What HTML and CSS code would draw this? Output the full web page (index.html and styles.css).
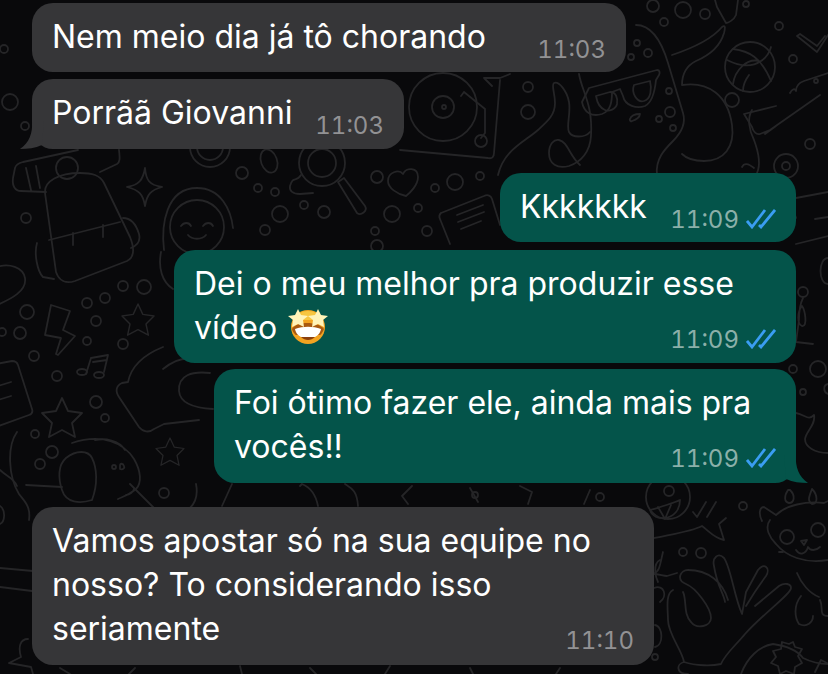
FILE: index.html
```
<!DOCTYPE html>
<html lang="pt-BR">
  <head>
    <meta charset="UTF-8" />
    <meta name="viewport" content="width=device-width, initial-scale=1.0" />
    <title>Conversa</title>
    <link rel="stylesheet" href="styles.css">
  </head>
  <body>
    <svg class="wallpaper" viewBox="0 0 828 674" aria-hidden="true">
      <defs>
        <polygon id="star" points="0,-20 6,-7 20,-5 10,5 13,19 0,12 -13,19 -10,5 -20,-5 -6,-7" />
      </defs>

      <!-- backpack and bedroll -->
      <path d="M45 193c-1-12 14-20 35-20 12 0 20 2 24 10l26 54c4 10 5 20-3 24l-52 20c-9 3-16 0-19-9z" />
      <path d="M49 240l71-18M73 233v12M103 225v12" />
      <path d="M37 243c-3 10 0 28 6 34l11 2M123 218c8 0 13 6 16 16 2 8-3 12-8 14" />
      <path d="M46 192l-25-1c-6 0-9-5-8-13l2-10c1-4 4-5 8-6l55-12M100 172l17-8c3-2 3-5 2-14M26 168l5 22M36 166l4 22" />
      <circle cx="67" cy="168" r="11" />
      <path d="M145 168c1 12 4 17 17 19-11 3-15 7-17 19-2-12-6-16-18-19 12-2 16-7 18-19z" />

      <!-- little face -->
      <circle cx="197" cy="227" r="27" />
      <path d="M164 250c-3-25 2-62 33-62 24 0 34 22 36 40M181 226c3-4 8-4 10 0M203 226c3-4 8-4 10 0M188 235c4 5 14 5 18 0" />
      <path d="M161 252c-3 16 1 30 12 37" />

      <!-- bolt, stars, note -->
      <path d="M51 305l19 6-7 19 12 6-17 19-2-1 5-16-16-3z" />
      <use href="#star" transform="translate(138 320) scale(.8)" />
      <use href="#star" transform="translate(62 418)" />
      <use href="#star" transform="translate(170 452) scale(.7)" />
      <path d="M91 358l17-3-4 17M91 358l-5 16M93 362l14-2" />
      <ellipse cx="82" cy="372" rx="5" ry="3" />
      <ellipse cx="99" cy="375" rx="5" ry="3" />

      <!-- card and left oval -->
      <path d="M-4 364l16-3c3 0 5 1 6 4l14 44c1 3 0 5-3 6l-33 12M-2 386l13-4M-2 400l13-4" />
      <path d="M-3 267c12-4 26 0 28 11 2 13-14 21-28 27" />

      <!-- hand on the left -->
      <path d="M163 347c-20 8-32 20-35 35l-6 1c-6 3-7 8-3 14l20 30c4 5 10 6 15 2l10-5 35-4M163 369c10-8 20-12 30-10M210 373c-18-2-32 2-31 18 1 12 14 17 34 18" />

      <!-- dog -->
      <path d="M72 443c30-10 52 0 62 16 7 12 8 24 2 30-7 6-14 8-18 10M95 440c10-2 24 0 30 10M92 500c-12 4-26 3-30-10-4-12-4-25 4-32 10-8 22-8 26 0 5 10 6 26 0 42M120 469c3 1 5-1 4-3-1-3-4-3-4 0zM126 495c4 0 7-3 8-6" />
      <path d="M17 432c-10 14-9 44 2 62 5 7 12 12 10 26M26 485l36 2" />
      <circle cx="114" cy="467" r="2" />

      <!-- magnifier, heart, card -->
      <circle cx="322" cy="163" r="23" />
      <circle cx="322" cy="163" r="14" />
      <path d="M338 182l6-4 21 28c3 5-4 10-8 7z" />
      <path d="M301 175c-5 8-8 0-11 11-1 5 3 8 10 8l13-1" />
      <path d="M403 174c3-7 15-7 15 3 0 8-8 16-12 19-9-2-18-8-18-15 0-9 11-12 15-7z" />
      <path d="M441 213l43-17c4-2 7 0 8 3l8 26M441 213c-2 2-2 4-1 6l10 25M457 215l26-10M458 222l26-10M461 229l20-8" />
      <ellipse cx="269" cy="161" rx="8" ry="12" transform="rotate(-20 269 161)" />
      <circle cx="210" cy="147" r="20" />
      <circle cx="210" cy="147" r="13" />

      <!-- turntable -->
      <circle cx="443" cy="107" r="34" />
      <circle cx="443" cy="107" r="11" />
      <circle cx="444" cy="107" r="2" />
      <path d="M464 92l21 17v24l-4 5M461 96l3-4" />
      <circle cx="481" cy="141" r="6" />
      <path d="M500 80l-6 73c0 4-2 6-6 5l-88-8M484 78h16l10-4M484 78l8 8" />
      <circle cx="528" cy="87" r="5" />
      <circle cx="528" cy="112" r="7" />

      <!-- flame and tentacles -->
      <path d="M498 175c6-25 25-32 40-45 10-9 17-15 17-27 0-10-4-18-1-20 5-2 13 8 15 19 2 12-3 24 0 30 3 6 16 6 21 0" />
      <path d="M579 74c3 18 14 30 12 62-1 16-10 26-22 30-12 3-20-2-20-13 0-9 5-14 10-13 9 2 10 15 21 25" />
      <path d="M636 25c16 0 26 18 32 38l15 50c3 10-2 20-10 28-8 8-18 18-16 34M672 55c24-8 40-16 50-28 4-3 3 2 2 6-4 14-14 22-28 28-10 5-14 14-14 24 26-4 46 10 50 40 3 22-8 36-28 36-10 0-18-3-22-7" />
      <circle cx="637" cy="43" r="3" />
      <circle cx="648" cy="53" r="4" />
      <circle cx="631" cy="57" r="3" />

      <!-- sunglasses -->
      <path d="M589 88l68-18c3 0 3 3 2 5l-3 5c-1 10-3 22-11 26-8 3-20 0-22-10l-3-7-8 3c0 9-1 19-10 22-10 3-18-1-20-12z" />
      <path d="M596 96l14-4c6 0 8 6 7 12-1 5-8 8-12 6-5-2-8-8-9-14zM634 85l16-4c2 8 1 18-6 20-7 2-13-8-10-16z" />
      <path d="M632 121c4-1 8-4 8-7-5 0-9 2-10 5-1 1 1 3 2 2z" />
      <circle cx="670" cy="112" r="5" />
      <circle cx="659" cy="119" r="3" />
      <circle cx="673" cy="128" r="3" />
      <circle cx="669" cy="91" r="3" />

      <!-- basketball and top right -->
      <circle cx="750" cy="67" r="25" />
      <path d="M733 49c16 2 28 8 38 32M727 60c12 6 24 8 34 1 6-4 9-10 10-14M733 84c2-14 14-26 26-23M743 91c0-6 3-12 6-16" />
      <path d="M797 36l20 16 11-17M797 36l3-2 17 12 8-10" />
      <circle cx="793" cy="59" r="4" />
      <circle cx="779" cy="26" r="4" />
      <path d="M738 0l-2 15c-2 5-8 8-10 8l-9-16-2-7" />
      <circle cx="746" cy="4" r="3" />
      <circle cx="653" cy="6" r="6" />
      <circle cx="683" cy="10" r="8" />
      <circle cx="705" cy="14" r="5" />
      <circle cx="664" cy="22" r="4" />
      <circle cx="732" cy="100" r="7" />
      <path d="M828 73l-24 8c-6 2-8 5-8 10-1-3-4-2-6 2M820 95l-50 35-10 4c-4 1-7-3-8-7l-8-13 32-8M776 126l-11 8" />
      <circle cx="816" cy="81" r="2" />
      <path d="M752 110c-5 8-3 20 2 30 3 8 8 22 3 33M754 168c-6-5-10-5-12-1" />
      <circle cx="810" cy="144" r="5" />
      <circle cx="786" cy="166" r="12" />
      <circle cx="786" cy="166" r="4" />

      <!-- right edge -->
      <path d="M796 198l32-6M815 219l13-2M796 244l32-8M796 218l-4-12" />
      <path d="M828 258c-10 0-10 26 0 26" />
      <circle cx="803" cy="292" r="5" />
      <path d="M803 298c-4 8-4 18-4 22l-3 22 17 2M802 306c-5 6-5 18 0 20 6 1 3-16 0-20z" />
      <circle cx="793" cy="369" r="4" />
      <circle cx="818" cy="369" r="8" />
      <circle cx="803" cy="392" r="3" />
      <path d="M796 413c10 2 12 8 18 2 2 10-8 16-9 24 0 8 10 14 23 14M828 384c-5 1-5 8 0 10" />
      <path d="M812 489c-3 8-5 12 0 15 6 0 6-9 0-15zM788 490c-4 6-4 12 1 13 5 0 7-7 1-13z" />

      <!-- face with tongue, parcel -->
      <circle cx="668" cy="497" r="22" />
      <path d="M650 510c8-2 26-8 30-10 0 10-6 16-14 18-8 1-14-2-16-8zM658 507l7 12 6-14" />
      <circle cx="669" cy="491" r="5" />
      <path d="M646 540c20-5 45-8 56-14 8 6 12 12 22 14l-5-16 7-6" />
      <path d="M697 517l9-15M707 517l9-15M697 517l-4-5" />
      <circle cx="743" cy="506" r="4" />
      <circle cx="683" cy="552" r="4" />
      <circle cx="701" cy="553" r="5" />
      <path d="M663 552c-3 12-3 20-10 22 6 0 10 2 14 2l10-3M654 588c10-4 14 8 6 14" />

      <!-- ok hand -->
      <path d="M673 590c-8 4-5 20-5 30 0 14 14 30 16 42-8 2-8 12 4 12M684 662c12 4 28 4 37 2 4-10 16-20 24-30 20-22 46-40 46-46 0-4-6-6-12-2l-24 20M746 606c6-10 14-22 20-30 5-8-2-14-8-6l-12 22-4 22c-8-18-11-46-18-56-6-6-12 0-10 8 3 20 10 28 11 36M728 600c-5-18-20-30-40-30-8 0-12 10-2 14 10 4 25 24 25 34 0 8-14 12-20 4-8-8-4-22-8-30" />

      <!-- cat -->
      <path d="M762 521c-4-8-2-14 2-14l12 8c10-10 30-14 48-12l4-2M770 520c-6 8 0 18 6 24 10 12 28 20 52 16M797 573c4 10 12 20 22 24M801 596c-8 10-6 22-2 28 8 4 14-2 14-8M820 600c4 8-2 16 8 16" />
      <circle cx="787" cy="537" r="7" />
      <circle cx="818" cy="530" r="7" />
      <path d="M801 541l6-1-3 5zM796 550c4 6 10 4 12-3 2 4 8 4 12 0M779 552h4" />
      <path d="M782 642l7 2 4-2 2 5 7 2-4 7 4 7-7 4-1 7-8-3-6 3-2-8-7-3 5-6-3-6 8-2z" />
      <path d="M815 672l6-12 6 3" />
      <path d="M741 674c6-16 18-28 32-30 14 2 24 6 30 14 8 4 18 6 25 6" />
      <circle cx="655" cy="657" r="3" />
      <path d="M655 625c8 1 9 20 0 22M660 560c-8 4-4 18-2 22" />

      <!-- bottom strip and centre strip -->
      <path d="M0 470c6 6 14 8 17 16M0 568l33 3M0 587l32 4M28 639c-8 0-10 8-7 18l-12 6 22 4 2 7M0 506c6 4 5 16 0 18" />
      <path d="M130 484l24 24M196 484c2 10 0 18-6 24M232 484l-10 22M300 486l2-2c10 4 14 12 16 22M345 484c6 4 12 6 13 22M412 486l-10 10 6 8M470 488l8 14M520 486l12 6-4 12M590 490l-6 14" />
      <circle cx="164" cy="493" r="5" />
      <circle cx="475" cy="495" r="3" />
      <circle cx="600" cy="497" r="4" />
      <path d="M60 668l10 6M135 668l-6 6M240 666l2 8M310 668l6 6M390 666l-5 8M470 668l3 6M560 668l-4 6" />

      <!-- circles scattered around -->
      <circle cx="4" cy="49" r="4" />
      <circle cx="10" cy="102" r="8" />
      <circle cx="25" cy="126" r="4" />
      <circle cx="26" cy="218" r="5" />
      <circle cx="27" cy="312" r="7" />
      <circle cx="2" cy="332" r="4" />
      <circle cx="20" cy="333" r="6" />
      <circle cx="87" cy="303" r="5" />
      <circle cx="105" cy="298" r="5" />
      <circle cx="123" cy="286" r="5" />
      <circle cx="144" cy="287" r="7" />
      <circle cx="96" cy="321" r="5" />
      <circle cx="87" cy="341" r="4" />
      <circle cx="123" cy="344" r="5" />
      <circle cx="34" cy="356" r="5" />
      <circle cx="57" cy="376" r="5" />
      <circle cx="96" cy="402" r="6" />
      <circle cx="105" cy="418" r="4" />
      <circle cx="35" cy="434" r="4" />
      <circle cx="52" cy="452" r="6" />
      <circle cx="40" cy="464" r="5" />
      <circle cx="242" cy="173" r="6" />
      <circle cx="258" cy="188" r="4" />
      <circle cx="275" cy="192" r="4" />
      <circle cx="280" cy="214" r="8" />
      <circle cx="265" cy="230" r="5" />
      <circle cx="304" cy="205" r="4" />
      <circle cx="324" cy="212" r="6" />
      <circle cx="392" cy="214" r="8" />
      <circle cx="375" cy="231" r="4" />
      <circle cx="418" cy="208" r="4" />
      <circle cx="427" cy="231" r="5" />
      <circle cx="377" cy="177" r="6" />
      <circle cx="435" cy="188" r="4" />
      <circle cx="455" cy="182" r="8" />
      <circle cx="480" cy="176" r="4" />
      <circle cx="377" cy="246" r="6" />
    </svg>

    <main class="chat">
      <div class="bubble bubble-in width-chorando">
        <p class="text">Nem meio dia já tô chorando</p>
        <span class="meta"><span class="time">11:03</span></span>
      </div>
      <div class="bubble bubble-in width-giovanni tail-left tall">
        <p class="text">Porrãã Giovanni</p>
        <span class="meta"><span class="time">11:03</span></span>
      </div>

      <div class="bubble bubble-out width-kkk group-start">
        <p class="text">Kkkkkkk</p>
        <span class="meta">
          <span class="time">11:09</span>
          <svg class="ticks" viewBox="0 0 30 20"><path d="M1 12l5 6L19 1M13 16l2 2L29 1" /></svg>
        </span>
      </div>
      <div class="bubble bubble-out stacked width-video">
        <p class="text">Dei o meu melhor pra produzir esse</p>
        <div class="last-row">
          <p class="text">vídeo
            <svg class="emoji" viewBox="0 0 40 36" role="img" aria-label="🤩">
              <circle cx="20" cy="19" r="17" fill="#f2a321" />
              <path d="M5 12a17 17 0 0 1 30 0z" fill="#f7c640" />
              <path d="M4 21c4-8 26-8 32 0-2 5-4 6-4 6H8s-3-2-4-6z" fill="#a9590f" />
              <path d="M7 21c8-3 18-3 26 0-1 5-4 7-6 8H13c-2-1-5-3-6-8z" fill="#fff" />
              <path d="M13 29c4 4 10 4 14 0z" fill="#8a3f0e" />
              <path d="M10 1l3 6 7 1-5 4 1 7-6-3-6 3 1-7-5-4 7-1zM30 1l3 6 7 1-5 4 1 7-6-3-6 3 1-7-5-4 7-1z" fill="#fff3b8" />
            </svg>
          </p>
          <span class="meta">
            <span class="time">11:09</span>
            <svg class="ticks" viewBox="0 0 30 20"><path d="M1 12l5 6L19 1M13 16l2 2L29 1" /></svg>
          </span>
        </div>
      </div>
      <div class="bubble bubble-out stacked width-voces tail-right tall">
        <p class="text">Foi ótimo fazer ele, ainda mais pra</p>
        <div class="last-row">
          <p class="text">vocês!!</p>
          <span class="meta">
            <span class="time">11:09</span>
            <svg class="ticks" viewBox="0 0 30 20"><path d="M1 12l5 6L19 1M13 16l2 2L29 1" /></svg>
          </span>
        </div>
      </div>

      <div class="bubble bubble-in stacked width-equipe group-start tall">
        <p class="text">Vamos apostar só na sua equipe no nosso? To considerando isso</p>
        <div class="last-row">
          <p class="text">seriamente</p>
          <span class="meta"><span class="time">11:10</span></span>
        </div>
      </div>
    </main>
  </body>
</html>
```

FILE: styles.css
```
* {
  box-sizing: border-box;
}
html,
body {
  height: 100%;
}
body {
  margin: 0;
  background-color: #09090b;
  font-family: Inter, "Liberation Sans", sans-serif;
  overflow: hidden;
  position: relative;
}
.wallpaper {
  position: absolute;
  top: 0;
  left: 0;
  width: 828px;
  height: 674px;
  fill: none;
  stroke: #252527;
  stroke-width: 1.8;
  stroke-linecap: round;
  stroke-linejoin: round;
}
.chat {
  position: relative;
  display: flex;
  flex-direction: column;
  align-items: flex-start;
  gap: 7px;
  padding: 3px 32px 0;
}
.bubble {
  position: relative;
  display: flex;
  justify-content: space-between;
  padding: 12px 20px 13px 20px;
  border-radius: 21px;
  color: #fff;
}
.bubble-in {
  background-color: #363638;
}
.bubble-out {
  align-self: flex-end;
  background-color: #04544a;
}
.text {
  margin: 0;
  font-size: 32px;
  line-height: 44px;
}
.meta {
  display: flex;
  align-items: center;
  align-self: flex-end;
  gap: 7px;
  height: 26px;
  margin-bottom: -3px;
  flex-shrink: 0;
}
.time {
  font-size: 24px;
  font-feature-settings: "tnum";
}
.bubble-in .time {
  color: #929294;
}
.bubble-out .time {
  color: #8bb0a9;
}
.ticks {
  width: 30px;
  height: 20px;
  fill: none;
  stroke: #3a9df2;
  stroke-width: 2.8;
}
.emoji {
  width: 40px;
  height: 36px;
  margin-left: 2px;
  vertical-align: -5px;
}
.tall {
  padding-bottom: 14px;
}
.group-start {
  margin-top: 17px;
}
.stacked {
  display: block;
}
.last-row {
  display: flex;
  justify-content: space-between;
}
.last-row .meta {
  margin-bottom: -2px;
}
.width-chorando {
  width: 594px;
}
.width-giovanni {
  width: 372px;
}
.width-kkk {
  width: 296px;
}
.width-video {
  width: 622px;
  margin-top: 1px;
}
.width-voces {
  width: 582px;
  margin-top: -1px;
}
.width-equipe {
  width: 622px;
}
.tail-left::before,
.tail-right::after {
  content: "";
  position: absolute;
  bottom: 0;
  width: 24px;
  height: 28px;
}
.tail-left::before {
  left: -12px;
  background-color: #363638;
  clip-path: path("M12 0C13 12 9 22 0 28C8 28 15 27 22 24L24 0Z");
}
.tail-right::after {
  right: -12px;
  background-color: #04544a;
  clip-path: path("M12 0C11 12 15 22 24 28C16 28 9 27 2 24L0 0Z");
}
```
